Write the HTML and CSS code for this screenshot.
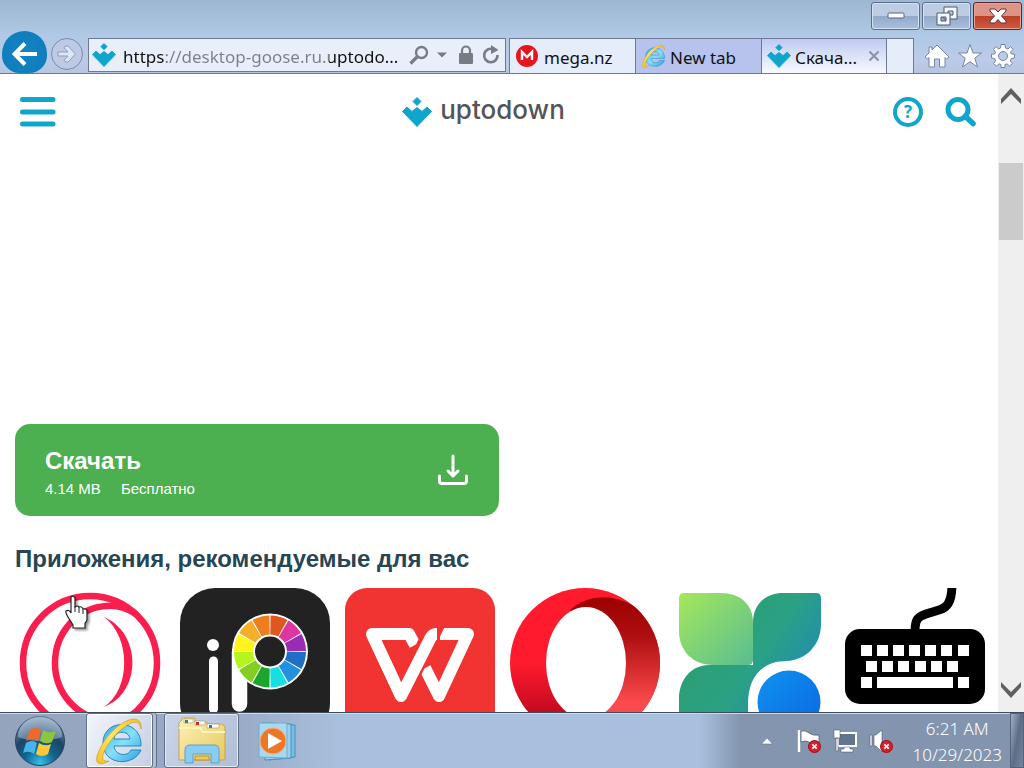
FILE: index.html
```html
<!DOCTYPE html>
<html lang="ru">
<head>
<meta charset="utf-8">
<title>Скачать Desktop Goose</title>
<link rel="stylesheet" href="styles.css">
</head>
<body>
<svg class="defs" aria-hidden="true">
  <symbol id="updown" viewBox="0 0 30 30">
    <path fill="#10a5cb" d="M15 .5 19 4.500 15 8.500 11 4.500ZM5 10 10 14.500 15 10.500 20 14.500 25 10 29.500 14.500 15 29.500 .5 14.500Z" stroke="#10a5cb" stroke-linejoin="round"/>
  </symbol>
  <symbol id="ie" viewBox="0 0 48 48">
    <defs>
      <linearGradient id="ieblue" x1="0" y1="0" x2="1" y2="1"><stop offset="0" stop-color="#3aa9e2"/><stop offset=".5" stop-color="#86e0fb"/><stop offset="1" stop-color="#2f9fdb"/></linearGradient>
      <linearGradient id="iegold" x1="0" y1="1" x2="1" y2="0"><stop offset="0" stop-color="#f0c22c"/><stop offset=".5" stop-color="#ffe566"/><stop offset="1" stop-color="#f0c22c"/></linearGradient>
    </defs>
    <path fill="url(#ieblue)" stroke="#2487c0" d="M45 29H18C19 39 32 40 35 33H45C38 50 7 49 7 26 7 1 46 1 45 29ZM18 22H34C33 13 19 13 18 22Z"/>
    <path fill="url(#iegold)" stroke="#c9961a" stroke-width=".6" d="M45 12C46 4 41 0 33 3 18 8 5 26 1 39-1 47 4 49 13 44 7 45 5 42 8 35 14 22 25 11 35 6 41 4 44 6 45 12Z"/>
  </symbol>
  <symbol id="error" viewBox="0 0 12 12">
    <circle cx="6" cy="6" r="5.500" fill="#d8202a" stroke="#a31319"/>
    <path d="M4 4 8 8M8 4 4 8" stroke="#fff" stroke-width="1.600"/>
  </symbol>
</svg>
<div class="desktop">
  <header class="frame">
    <div class="titlebar">
      <button class="win" aria-label="Minimize"><svg width="20" height="8" viewBox="0 0 20 8"><rect x="2" y="1" width="16" height="5" rx="1" fill="#fff" stroke="#56637c"/></svg></button>
      <button class="win" aria-label="Restore"><svg width="22" height="22" viewBox="0 0 22 22" fill-rule="evenodd" fill="#f4f7fc" stroke="#4d596e"><path d="M8 2H21V14H8ZM12 6V10H17V6Z"/><path d="M1 8H14V20H1ZM5 12V16H10V12Z"/></svg></button>
      <button class="win close" aria-label="Close"><svg width="20" height="18" viewBox="0 0 20 18"><path fill="#fff" stroke="#5b3340" d="M2 2H7L10 5 13 2H18V4L13.500 9 18 14V16H13L10 12.500 7 16H2V14L6.500 9 2 4Z"/></svg></button>
    </div>
    <div class="toolbar">
      <div class="nav">
        <button class="back" aria-label="Back"><svg width="26" height="26" viewBox="0 0 26 26"><path d="M25 13H3M13 2.500 2.500 13 13 23.500" fill="none" stroke="#fff" stroke-width="4"/></svg></button>
        <button class="forward" aria-label="Forward"><svg width="20" height="18" viewBox="0 0 20 18"><path d="M1 7H11L7 2.500 9 1H11L18.500 9 11 17H9L7 15.500 11 11H1Z" fill="#dce6f5" stroke="#8d9db9"/></svg></button>
      </div>
      <div class="address">
        <svg class="favicon" width="24" height="24"><use href="#updown"/></svg>
        <input class="url" type="text" aria-label="Address" value="https://desktop-goose.ru.uptodo...">
        <button class="tool" aria-label="Search"><svg width="20" height="20" viewBox="0 0 20 20" fill="none" stroke="#777c84"><circle cx="12.500" cy="7.500" r="5.500" stroke-width="2.300"/><path d="M8.500 11.500 1.500 18.500" stroke-width="3.200"/></svg></button>
        <button class="tool" aria-label="Show history"><svg width="10" height="6" viewBox="0 0 10 6"><path d="M0 .5H10L5 5.500Z" fill="#777c84"/></svg></button>
        <button class="tool lock" aria-label="Security report"><svg width="16" height="20" viewBox="0 0 16 20"><rect x="1" y="8" width="14" height="11" rx="1" fill="#777c84"/><path d="M4 9V5.500a4 4 0 0 1 8 0V9" fill="none" stroke="#777c84" stroke-width="2.200"/></svg></button>
        <button class="tool" aria-label="Refresh"><svg width="18" height="20" viewBox="0 0 18 20"><path d="M11 4.200A6.700 6.700 0 1 0 15.500 10" fill="none" stroke="#777c84" stroke-width="2.600"/><path d="M9 0 16.500 5 9 9Z" fill="#777c84"/></svg></button>
      </div>
      <nav class="tabs" aria-label="Tabs">
        <a class="tab mega" href="#mega"><svg width="24" height="24" viewBox="0 0 24 24"><circle cx="11" cy="12" r="11" fill="#e8141c"/><path d="M6 16V8L11 13 16 8V16" fill="none" stroke="#fff" stroke-width="2.400"/></svg><span>mega.nz</span></a>
        <a class="tab blank" href="#blank"><svg width="24" height="24"><use href="#ie"/></svg><span>New tab</span></a>
        <div class="tab active"><svg width="24" height="24"><use href="#updown"/></svg><span>Скача...</span><button class="tabclose" aria-label="Close tab"><svg width="12" height="12" viewBox="0 0 12 12"><path d="M1.500 1.500 10.500 10.500M10.500 1.500 1.500 10.500" stroke="#8d91a8" stroke-width="2"/></svg></button></div>
        <button class="newtab" aria-label="New tab"></button>
      </nav>
      <div class="commands">
        <button class="tool" aria-label="Home"><svg width="26" height="26" viewBox="0 0 26 26"><path d="M13 2 25 14 22.500 16 21 14.500V24H15.500V16H10.500V24H5V14.500L3.500 16 1 14 5 10V4H8V7Z" fill="#fff" stroke="#7686a2"/></svg></button>
        <button class="tool" aria-label="Favorites"><svg width="26" height="26" viewBox="0 0 26 26"><path d="M13 1.500 16 10H24.500L17.800 15.200 20.500 24 13 18.700 5.500 24 8.200 15.200 1.500 10H10Z" fill="#fff" stroke="#7686a2"/></svg></button>
        <button class="tool" aria-label="Tools"><svg width="26" height="26" viewBox="0 0 26 26"><path fill-rule="evenodd" d="M11 1.500H15L15.500 5 18 6 20.500 3.500 23 6.500 20.500 9 21.300 11H24.500V15L21.300 15.500 20.300 18 22.500 20.500 19.500 23 17 20.800 15 21.500V24.500H11V21.500L9 20.800 6.500 23 3.500 20.500 5.500 18 4.700 15.500 1.500 15V11H4.700L5.500 9 3.500 6.500 6 3.500 8.500 6 10.500 5ZM13 8.500A4.500 4.500 0 1 0 13 17.500 4.500 4.500 0 1 0 13 8.500Z" fill="#fff" stroke="#7686a2"/></svg></button>
      </div>
    </div>
  </header>

  <div class="viewport">
    <div class="page">
      <header class="siteheader">
        <button class="plain left" aria-label="Меню"><svg width="36" height="30" viewBox="0 0 36 30"><path d="M2.500 2.500H33M2.500 15H33M2.500 27H33" stroke="#10a5cb" stroke-width="5" stroke-linecap="round"/></svg></button>
        <a class="logo" href="#home"><svg width="30" height="30"><use href="#updown"/></svg><span>uptodown</span></a>
        <div class="siteactions">
          <button class="plain help" aria-label="Помощь">?</button>
          <button class="plain" aria-label="Поиск"><svg width="32" height="30" viewBox="0 0 32 30"><circle cx="13" cy="12.500" r="10" fill="none" stroke="#10a5cb" stroke-width="5"/><path d="M20.500 19.500 28 26.500" stroke="#10a5cb" stroke-width="5.500" stroke-linecap="round"/></svg></button>
        </div>
      </header>
      <main class="content">
        <div class="adslot"></div>
        <button class="download">
          <span class="dltext"><strong>Скачать</strong><span class="meta"><span>4.14 MB</span><span>Бесплатно</span></span></span>
          <svg width="32" height="32" viewBox="0 0 32 32" fill="none" stroke="#fff" stroke-width="3" stroke-linecap="round" stroke-linejoin="round"><path d="M16 2V21M11 17 16 22 21 17M2.500 22V27Q2.500 29.500 5 29.500H27Q29.500 29.500 29.500 27V22"/></svg>
        </button>
        <h2>Приложения, рекомендуемые для вас</h2>
        <div class="apps">
          <a href="#gx" aria-label="Opera GX"><svg viewBox="0 0 150 150"><g fill="none" stroke="#fa1e4e" stroke-width="6.500"><circle cx="75" cy="75" r="67"/><path d="M121 26C112 20 101 17 91 18 62 20 40 45 40 75S62 130 91 132C101 133 112 130 121 124"/></g><path fill="#fa1e4e" d="M89 29C127 45 127 105 89 119 116 101 116 49 89 29Z"/></svg></a>
          <a href="#ibis" aria-label="ibis Paint X"><svg viewBox="0 0 150 150"><rect width="150" height="150" rx="35" fill="#222"/><circle cx="33" cy="57" r="6" fill="#fff"/><path d="M33.500 73V121" stroke="#fff" stroke-width="9" stroke-linecap="round"/><path d="M59.500 64V116" stroke="#fff" stroke-width="15.500" stroke-linecap="round"/><circle cx="90" cy="63.500" r="38" fill="#fff"/>
            <g fill="none" stroke-width="19" transform="rotate(-90 90 63.500)">
              <circle class="seg" cx="90" cy="63.500" r="26.500" pathLength="360" stroke="#df561f" stroke-dashoffset="-1"/>
              <circle class="seg" cx="90" cy="63.500" r="26.500" pathLength="360" stroke="#de35a4" stroke-dashoffset="-31"/>
              <circle class="seg" cx="90" cy="63.500" r="26.500" pathLength="360" stroke="#9b2bb4" stroke-dashoffset="-61"/>
              <circle class="seg" cx="90" cy="63.500" r="26.500" pathLength="360" stroke="#1f70c4" stroke-dashoffset="-91"/>
              <circle class="seg" cx="90" cy="63.500" r="26.500" pathLength="360" stroke="#2391df" stroke-dashoffset="-121"/>
              <circle class="seg" cx="90" cy="63.500" r="26.500" pathLength="360" stroke="#16dfe3" stroke-dashoffset="-151"/>
              <circle class="seg" cx="90" cy="63.500" r="26.500" pathLength="360" stroke="#1ca42c" stroke-dashoffset="-181"/>
              <circle class="seg" cx="90" cy="63.500" r="26.500" pathLength="360" stroke="#84cd22" stroke-dashoffset="-211"/>
              <circle class="seg" cx="90" cy="63.500" r="26.500" pathLength="360" stroke="#b4f51d" stroke-dashoffset="-241"/>
              <circle class="seg" cx="90" cy="63.500" r="26.500" pathLength="360" stroke="#fcf41c" stroke-dashoffset="-271"/>
              <circle class="seg" cx="90" cy="63.500" r="26.500" pathLength="360" stroke="#f3af2a" stroke-dashoffset="-301"/>
              <circle class="seg" cx="90" cy="63.500" r="26.500" pathLength="360" stroke="#ee7d1c" stroke-dashoffset="-331"/>
            </g><circle cx="90" cy="63.500" r="15" fill="#222"/></svg></a>
          <a href="#wps" aria-label="WPS Office"><svg viewBox="0 0 150 150"><rect width="150" height="150" rx="22" fill="#f13332"/><g fill="none" stroke-linejoin="round" stroke="#fff" stroke-width="12"><path d="M70 57 64 46H27L56 108"/><path d="M95 46H123L94 108 80 80"/></g><path d="M56 108 92 34" stroke="#f13332" stroke-width="18"/><path d="M27 46 56 108 86 49Q88 46 92 46" fill="none" stroke="#fff" stroke-width="12" stroke-linejoin="round"/></svg></a>
          <a href="#opera" aria-label="Opera"><svg viewBox="0 0 150 150"><defs><linearGradient id="opl" x1="0" y1="0" x2="0" y2="1"><stop offset=".5" stop-color="#ff1b2d"/><stop offset="1" stop-color="#a5001a"/></linearGradient><linearGradient id="opr" x1="0" y1="0" x2="0" y2="1"><stop offset="0" stop-color="#9c0000"/><stop offset=".3" stop-color="#ae0f12"/><stop offset=".8" stop-color="#fb4a4c"/></linearGradient></defs><circle cx="75" cy="75" r="75" fill="url(#opl)"/><path fill="url(#opr)" d="M60 22C77 6 104 5 125 19A75 75 0 0 1 125 131C104 145 77 144 60 128Z"/><ellipse cx="76" cy="75" rx="40" ry="56" fill="#fff"/></svg></a>
          <a href="#leaf" aria-label="iTop"><svg viewBox="0 0 150 150"><defs><linearGradient id="lfa" x1="0" y1="0" x2="1" y2="1"><stop offset="0" stop-color="#a5e85c"/><stop offset="1" stop-color="#58bd91"/></linearGradient><linearGradient id="lfb" gradientUnits="userSpaceOnUse" x1="50" y1="30" x2="130" y2="85"><stop offset="0" stop-color="#2c9f76"/><stop offset=".5" stop-color="#2ba184"/><stop offset="1" stop-color="#218fab"/></linearGradient><linearGradient id="lfc" x1="0" y1="0" x2="1" y2="1"><stop offset="0" stop-color="#0f93ee"/><stop offset="1" stop-color="#0a66e4"/></linearGradient></defs><path fill="url(#lfb)" d="M78 35C78 16 91 5 108 5H141Q146 5 146 10V36C146 58 130 72 112 73 86 73 73 90 73 116V145H9Q4 145 4 140V111C4 91 17 77 34 77H78Z"/><path fill="url(#lfa)" d="M9 5H46C65 5 78 16 78 35V72Q78 77 73 77H38C17 77 4 62 4 43V10Q4 5 9 5Z"/><circle cx="114" cy="114" r="31.500" fill="url(#lfc)"/></svg></a>
          <a href="#keyboard" aria-label="Keyboard"><svg viewBox="0 0 150 150"><path d="M75 44C75 32 77 29 86 26L99 22C107 20 112 14 112-4" fill="none" stroke="#000" stroke-width="9"/><rect x="5" y="41" width="140" height="75" rx="15"/><path fill="#fff" d="M21 57h11v11H21ZM37 57h11v11H37ZM53 57h11v11H53ZM69 57h11v11H69ZM85 57h11v11H85ZM101 57h11v11h-11ZM118 57h11v11h-11ZM26 73h11v11H26ZM42 73h11v11H42ZM58 73h11v11H58ZM75 73h11v11H75ZM91 73h11v11H91ZM107 73h11v11h-11ZM21 89h11v11H21ZM37 89h76v11H37ZM118 89h11v11h-11Z"/></svg></a>
        </div>
      </main>
    </div>
    <div class="scrollbar">
      <button class="arrow" aria-label="Scroll up"><svg width="20" height="16" viewBox="0 0 20 16"><path d="M0 11 10 0 20 11V16L10 6 0 16Z" fill="#606060"/></svg></button>
      <div class="track"><div class="thumb"></div></div>
      <button class="arrow" aria-label="Scroll down"><svg width="20" height="16" viewBox="0 0 20 16"><path d="M0 5 10 16 20 5V0L10 10 0 0Z" fill="#606060"/></svg></button>
    </div>
    <svg class="cursor" width="28" height="36" viewBox="0 0 28 36"><path d="M6 2Q8 0 10 3V12Q13 10 14 12 17 11 18 14 22 13 22 17V24Q22 27 20 28V33H8V30L3 22Q0 17 1 16 4 14 6 18Z" fill="#fff" stroke="#222" stroke-width="1.200"/><path d="M10 11V17M14 12V18M18 14V19" stroke="#222"/></svg>
  </div>

  <footer class="taskbar">
    <button class="start" aria-label="Start"><svg width="52" height="52" viewBox="0 0 52 52"><defs><radialGradient id="orb" cx=".5" cy=".95" r=".9"><stop offset="0" stop-color="#35c4e8"/><stop offset=".35" stop-color="#0f6593"/><stop offset=".65" stop-color="#1d4565"/><stop offset="1" stop-color="#8298b5"/></radialGradient></defs><circle cx="26" cy="26" r="24.500" fill="url(#orb)" stroke="#2a435f"/><path d="M4 22A22 21 0 0 1 48 22Q26 30 4 22Z" fill="#d5e2f2" opacity=".38"/><path d="M16 15Q22 11 27 15L24 26Q18 22 12 26Z" fill="#ee6a28"/><path d="M29 15Q35 19 42 16L38 27Q32 30 26 26Z" fill="#8bc640"/><path d="M12 28Q18 24 23 28L20 39Q15 35 9 38Z" fill="#49b4ec"/><path d="M25 28Q31 32 37 29L34 39Q28 43 22 39Z" fill="#fcc934"/></svg></button>
    <button class="task stacked" aria-label="Internet Explorer"><svg width="48" height="48"><use href="#ie"/></svg></button>
    <button class="task" aria-label="Windows Explorer"><svg width="50" height="48" viewBox="0 0 50 48"><defs><linearGradient id="fold" x1="0" y1="0" x2="1" y2="1"><stop offset="0" stop-color="#fdf3b4"/><stop offset="1" stop-color="#e6c765"/></linearGradient></defs><path d="M2 43V6L5 3V1H18V5H30V7H45L48 10V43Z" fill="url(#fold)" stroke="#c4a54c"/><path d="M7 2H16V6H7ZM18 4H28V8H18ZM30 7H42V11H30Z" fill="#fff" stroke="#a99757" stroke-width=".6"/><path d="M8 3H11V6H8Z" fill="#398846"/><path d="M19 5H22V8H19Z" fill="#c4302b"/><path d="M32 8H35V11H32Z" fill="#287fac"/><path d="M2 11H23L26 15H48" fill="none" stroke="#fff5ba" stroke-width="2"/><path d="M8 46V33Q8 28 13 28H37Q42 28 42 33V46H34V37H16V46Z" fill="#8acdf0" stroke="#5ba0cb"/><path d="M18 39H32V43H18Z" fill="#efcb55" stroke="#b69238"/></svg></button>
    <button class="quick" aria-label="Windows Media Player"><svg width="40" height="40" viewBox="0 0 40 40"><path d="M10 2 38 4V36L12 39Z" fill="#79bfe4" stroke="#468fb9"/><path d="M6 2 34 3V37L8 39Z" fill="#9bd1ee" stroke="#468fb9"/><path d="M2 2H30V37L2 36Z" fill="#a9d8f1" stroke="#6bacd1"/><circle cx="16" cy="20" r="13" fill="#ee7624" stroke="#f7b078"/><path d="M11 12 25 20 11 28Z" fill="#fff"/></svg></button>
    <div class="tray">
      <button class="tool" aria-label="Show hidden icons"><svg width="12" height="8" viewBox="0 0 12 8"><path d="M6 1 11.500 7H.5Z" fill="#fff" stroke="#66758f" stroke-width=".6"/></svg></button>
      <button class="tool" aria-label="Action Center"><svg width="24" height="24" viewBox="0 0 24 24"><path d="M2 1V23" stroke="#fff" stroke-width="2.400"/><path d="M4 2Q9 1 12 4 16 7 22 6V15Q15 17 12 13 8 11 4 13Z" fill="#fff" stroke="#4e5c74" stroke-width=".8"/><use href="#error" x="11" y="11" width="13" height="13"/></svg></button>
      <button class="tool" aria-label="Network"><svg width="24" height="24" viewBox="0 0 24 24"><path d="M5 4H23V17H5Z" fill="#63748f" stroke="#fff" stroke-width="2"/><path d="M11 18H17V20H20V23H8V20H11ZM1 1H7V9H1ZM3 9H5V22H3Z" fill="#fff" stroke="#3f4b5e" stroke-width=".5"/></svg></button>
      <button class="tool" aria-label="Volume"><svg width="24" height="24" viewBox="0 0 24 24"><path d="M1 6H3V17H1ZM5 6H7L13 1V23L7 17H5Z" fill="#fff" stroke="#4e5c74" stroke-width=".6"/><use href="#error" x="11" y="11" width="13" height="13"/></svg></button>
      <time class="clock"><span>6:21 AM</span><span>10/29/2023</span></time>
      <button class="peek" aria-label="Show desktop"></button>
    </div>
  </footer>
</div>
</body>
</html>
```

FILE: styles.css
```css
* { box-sizing: border-box; }
body { margin: 0; font-family: "Liberation Sans", Arial, sans-serif; }
button { margin: 0; padding: 0; border: 0; background: none; font: inherit; color: inherit; }
svg { display: block; flex: none; }
a { color: inherit; text-decoration: none; }
.defs { position: absolute; width: 0; height: 0; }
.desktop { display: flex; flex-direction: column; height: 100vh; overflow: hidden; }

/* Browser frame */
.frame { background: linear-gradient(#9db7d1, #afc9e6 36px, #bccbe8 60px, #b6c5e2); font-family: "Noto Sans", sans-serif; font-size: 17px; border-bottom: 1px solid #6d7a91; }
.titlebar { display: flex; justify-content: flex-end; align-items: flex-start; gap: 2px; height: 38px; padding: 2px; }
.win { display: grid; place-items: center; width: 49px; height: 28px; border: 1px solid #5a6f8f; border-radius: 3px; box-shadow: inset 0 0 0 1px #d3e1f1; background: linear-gradient(#bccde3 48%, #92a9c8 50%, #a9bfdc); }
.win.close { border-color: #5a2530; box-shadow: inset 0 0 0 1px #e8a193; background: linear-gradient(#dd9486 48%, #bd3c28 50%, #cf5b42); }
.toolbar { display: flex; height: 35px; }
.nav { display: flex; align-items: flex-end; width: 88px; padding-left: 2px; gap: 4px; }
.back { display: grid; place-items: center; width: 45px; height: 42px; padding-top: 3px; border-radius: 23px 23px 18px 18px; background: radial-gradient(#1483c4, #0f7ebc 70%, #1674aa); }
.forward { display: grid; place-items: center; width: 32px; height: 32px; margin-bottom: 3px; border: 1px solid #7c8ca8; border-radius: 50%; background: #bccae5; }
.address { display: flex; flex: 1; align-items: center; min-width: 0; margin: 0 3px 1px 0; padding: 0 5px 0 3px; border: 1px solid #6d7a91; background: #e8eefa; }
.url { flex: 1; min-width: 0; height: 32px; margin-left: 7px; padding: 2px 0 0; border: 0; outline: 0; font: inherit; color: transparent; background: linear-gradient(90deg, #111 41px, #7b8088 41px 206px, #111 206px); background-clip: text; -webkit-background-clip: text; }
.tool { display: grid; place-items: center; }
.address .tool { margin-left: 6px; }
.address .tool + .tool { margin-left: 8px; }
.address .tool + .lock { margin-left: 11px; }
.tabs { display: flex; }
.tab { display: flex; align-items: center; gap: 4px; width: 126px; padding: 0 6px; border: 1px solid #6d7a91; border-width: 1px 0 0 1px; color: #111; }
.tab span { padding-top: 2px; }
.mega { background: #e5edfb; }
.blank { background: #b7c3ec; }
.active { width: 125px; padding-left: 5px; background: linear-gradient(#bfcaf2, #f8faff); }
.tabclose { margin-left: auto; }
.newtab { width: 28px; border: 1px solid #6d7a91; border-width: 1px 1px 0; background: #e5edfb; }
.commands { display: flex; align-items: center; justify-content: space-between; width: 110px; padding: 0 8px 0 10px; }

/* Site */
.viewport { position: relative; display: flex; flex: 1; min-height: 0; }
.page { flex: 1; min-width: 0; overflow: hidden; background: #fff; }
.siteheader { display: grid; grid-template-columns: 1fr auto 1fr; align-items: center; height: 75px; padding: 0 21px 0 20px; }
.left { justify-self: start; }
.logo { display: flex; align-items: center; gap: 8px; margin-right: 30px; color: #555559; font: 500 26px/30px Inter, sans-serif; }
.logo span { padding-bottom: 4px; }
.siteactions { display: flex; justify-content: flex-end; gap: 22px; }
.help { width: 30px; height: 30px; border: 4px solid #10a5cb; border-radius: 50%; color: #10a5cb; font: 700 17px/22px "Open Sans", sans-serif; }
.content { padding: 0 15px; }
.adslot { height: 275px; }
.download { display: flex; justify-content: space-between; align-items: center; width: 50%; height: 92px; padding: 0 30px; border-radius: 15px; background: #4caf50; color: #fff; text-align: left; }
.dltext { display: grid; gap: 3px; padding-top: 5px; }
.dltext strong { font-size: 24px; line-height: 30px; }
.meta { display: flex; gap: 20px; font-size: 15px; line-height: 20px; }
h2 { margin: 28px 0 14px; color: #264653; font-size: 24px; line-height: 30px; }
.apps { display: grid; grid-template-columns: repeat(6, 150px); gap: 15px; }
.seg { stroke-dasharray: 28 332; }
.scrollbar { display: flex; flex-direction: column; width: 26px; background: #efefef; }
.arrow { display: grid; place-items: center; height: 44px; }
.track { flex: 1; padding: 45px 1px 0; }
.thumb { height: 77px; background: #cbcbcb; }
.cursor { position: absolute; left: 65px; top: 521px; filter: drop-shadow(2px 2px 1px #0006); }

/* Taskbar */
.taskbar { display: flex; height: 56px; border-top: 1px solid #3d4b5c; background: linear-gradient(90deg, #94a4bd, #9aabc6 240px, #a8c0dd 340px, #a8c0dd 700px, #8495b0 740px, #8394ae); box-shadow: inset 0 1px #cddae8; }
.start { width: 80px; display: grid; place-items: center; }
.task { display: grid; place-items: center; width: 75px; margin: 0 0 0 6px; border: 1px solid #5e7088; border-radius: 3px; background: linear-gradient(120deg, #cbd5e8, #b0bed7); box-shadow: inset 0 0 0 1px #e2eaf5; }
.task.stacked { width: 67px; margin-right: 5px; background: linear-gradient(120deg, #f2f5fb, #c4cfe3); box-shadow: inset 0 0 0 1px #fff, 3px 0 0 #b1bdd1, 4px 0 0 #5e7088; }
.quick { display: grid; place-items: center; width: 76px; }
.tray { display: flex; align-items: center; gap: 12px; margin-left: auto; }
.tray .tool:first-child { margin-right: 12px; }
.clock { display: grid; margin: 2px 0 0 8px; color: #fff; font: 300 17px/26px "Noto Sans", sans-serif; text-align: center; }
.peek { align-self: stretch; width: 14px; margin-left: -4px; border: 1px solid #53637a; background: linear-gradient(100deg, #a2b0c5, #5d6d86 50%, #7585a0); }
```
